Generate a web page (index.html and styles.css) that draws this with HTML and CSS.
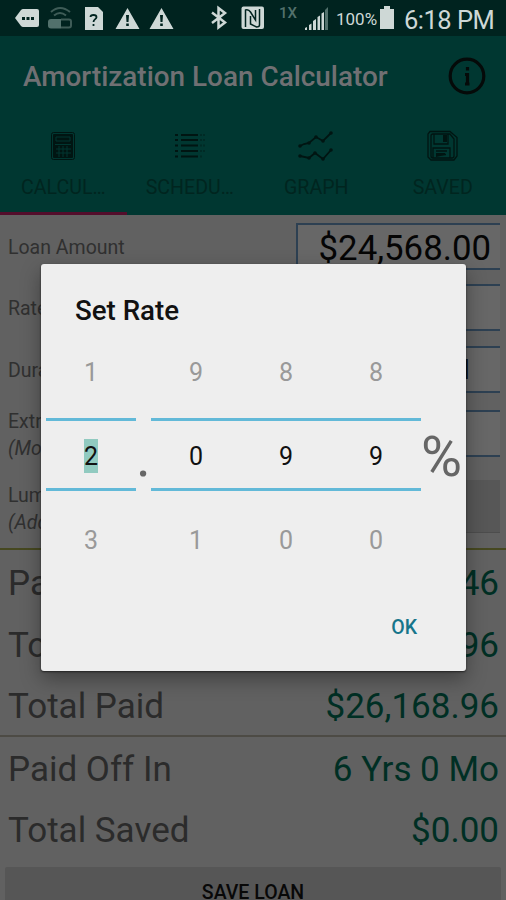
FILE: index.html
```
<!DOCTYPE html>
<html lang="en">
<head>
<meta charset="utf-8">
<title>Amortization Loan Calculator</title>
<link rel="stylesheet" href="styles.css">
</head>
<body>
<main class="screen">
  <header class="status">
    <svg class="status-icons" width="506" height="36" viewBox="0 0 506 36" aria-hidden="true">
      <g class="lit">
        <path d="M15 18l6-8q1-1 2-1h14q2 0 2 2v14q0 2-2 2H23q-1 0-2-1z"/>
        <path d="M85 7h13l5 5v18H85z"/>
        <path d="M127.500 8l12 21h-24zM161.500 8l12 21h-24z"/>
        <rect x="241.500" y="6.500" width="22.500" height="22.500" rx="2"/>
        <path d="M380 9h4V6h6v3h4v20h-14z"/>
      </g>
      <g class="hole"><path d="M22 17h3v3h-3zM26.500 17h3v3h-3zM31 17h3v3h-3zM126 15h3l-.5 7h-2zM126.200 23.500h2.600v2.500h-2.600zM160 15h3l-.5 7h-2zM160.200 23.500h2.600v2.500h-2.600z"/></g>
      <path class="hole-line" d="M90.500 17q0-2 3-2t3 2.200c0 2-3 2-3 4.800M93.500 24v2"/>
      <path class="hole-line nfc" d="M245.500 27V10q3-1 5 2l5 8V10M250.500 16v8l6 3q3 0 3-2V9"/>
      <g class="dim-line"><path d="M51 12q9-8 19 0M54 15.500q6-5 12 0M61 19.500h8q2 0 2 2v4q0 2-2 2h-8"/></g>
      <path class="dim" d="M51 19h10v9.500H51q-3 0-3-3V22q0-3 3-3z"/>
      <path class="bt" d="M212 12.500l13 10-6.500 5V8l6.500 5-13 10"/>
      <path class="lit" d="M305 30v-2l2-1v3zM309 30v-5l2.500-1.500V30zM313 30v-9l3-2v11zM317.500 30V17l2.500-1.500V30zM321.500 30V13.500l2.500-1.500v18z"/>
      <path class="dim" d="M325 30V10l3-3v23z"/>
    </svg>
    <span class="net">1X</span><span class="pct">100%</span><span class="clock">6:18 PM</span>
  </header>
  <div class="toolbar">
    <h1>Amortization Loan Calculator</h1>
    <svg width="40" height="40" viewBox="0 0 40 40" class="info" aria-hidden="true"><circle cx="20" cy="20" r="16.800"/><path d="M20.500 11v3.600M18 18.500h2.500v9M18 28h4.500"/></svg>
  </div>
  <nav class="tabs">
    <div class="tab active">
      <svg width="34" height="34" viewBox="0 0 34 34" aria-hidden="true"><rect x="5.500" y="3.500" width="23" height="27" rx="2" class="thin"/><rect x="7" y="5" width="20" height="24" rx="1" class="solid"/><path class="cut" d="M10 8h14v4H10zM9 15.500h16M10 20h15M10 24h15M13 17v11M17 17v11M21 17v11"/></svg>
      <span>CALCUL…</span>
    </div>
    <div class="tab">
      <svg width="34" height="34" viewBox="0 0 34 34" aria-hidden="true"><path class="rows" d="M8 6h17M8 11h17M8 16.500h17M8 22h17M8 27.500h17"/><path class="rows" d="M2 6h3M2 11h3M2 16.500h3M2 22h3M2 27.500h3"/><path class="faint" d="M27 6h2M30 6h2M27 11h2M30 11h2M27 16.500h2M30 16.500h2M27 22h2M30 22h2M27 27.500h2"/></svg>
      <span>SCHEDU…</span>
    </div>
    <div class="tab">
      <svg width="36" height="34" viewBox="0 0 36 34" aria-hidden="true"><path class="graph" d="M2 17l4-2 5-1 7-6 7 4 8-8M2 27l9 2 6-5 8 6 8-9"/><path class="knots" d="M2 17h0M11 14h0M18 8h0M25 12h0M33 4h0M2 27h0M11 29h0M17 24h0M25 30h0M33 21h0"/></svg>
      <span>GRAPH</span>
    </div>
    <div class="tab">
      <svg width="34" height="34" viewBox="0 0 34 34" aria-hidden="true"><path class="disk" d="M4 2.500h20l7 6V27l-3 4H5l-3-3V5zM7 5h17l4 5v17q0 2-2 2H7q-2 0-2-2V7q0-2 2-2zM8 5v10h14V5M7 29V19h17v10M10 22h11M10 25.500h10"/><path class="solid" d="M17 6h4v7h-4zM10 24h9v2l-9 2z"/></svg>
      <span>SAVED</span>
    </div>
  </nav>
  <section class="form">
    <div class="row r1"><label>Loan Amount</label><div class="field">$24,568.00</div></div>
    <div class="row r2"><label>Rate</label><div class="field"></div></div>
    <div class="row r3"><label>Duration</label><div class="field months">72 M</div></div>
    <div class="row r4"><label>Extra<br><i>(Mon)</i></label><div class="field"></div></div>
    <div class="row r5"><label>Lump<br><i>(Add)</i></label><div class="lump"></div></div>
  </section>
  <section class="results">
    <div class="result"><span>Payment</span><b>$363.46</b></div>
    <div class="result"><span>Total Int</span><b>$1,600.96</b></div>
    <div class="result"><span>Total Paid</span><b>$26,168.96</b></div>
  </section>
  <section class="results payoff">
    <div class="result"><span>Paid Off In</span><b>6 Yrs 0 Mo</b></div>
    <div class="result"><span>Total Saved</span><b>$0.00</b></div>
  </section>
  <div class="save">SAVE LOAN</div>
  <div class="dialog">
    <h2>Set Rate</h2>
    <div class="picker">
      <div class="wheel"><span>1</span><strong><mark>2</mark></strong><span>3</span></div>
      <div class="symbol">.</div>
      <div class="wheel"><span>9</span><strong>0</strong><span>1</span></div>
      <div class="wheel"><span>8</span><strong>9</strong><span>0</span></div>
      <div class="wheel"><span>8</span><strong>9</strong><span>0</span></div>
      <div class="symbol">%</div>
    </div>
    <div class="ok">OK</div>
  </div>
</main>
</body>
</html>
```
FILE: styles.css
```
* { box-sizing: border-box; }
body { margin: 0; font-family: Roboto, "Liberation Sans", sans-serif; }
.screen { position: relative; width: 506px; height: 900px; overflow: hidden; background: #616161; color: #2b2b2b; }
.status { position: relative; height: 36px; background: #00231f; color: #ced8d6; display: flex; justify-content: flex-end; align-items: center; padding-right: 12px; white-space: nowrap; }
.status-icons { position: absolute; left: 0; top: 0; }
.lit { fill: #ced8d6; }
.hole { fill: #00231f; }
.hole-line { fill: none; stroke: #00231f; stroke-width: 1.8; }
.nfc { stroke-width: 1.5; }
.dim { fill: #52716c; }
.dim-line { fill: none; stroke: #3e5c57; stroke-width: 2; }
.bt { fill: none; stroke: #ced8d6; stroke-width: 2.5; }
.net { font-size: 15px; font-weight: 500; color: #52716c; margin: -10px 39px 0 0; }
.pct { font-size: 17px; width: 42px; margin-right: 26px; padding-top: 2px; }
.clock { font-size: 25.5px; width: 90px; padding-top: 3px; letter-spacing: -.5px; }
.toolbar { height: 79px; background: #003731; display: flex; align-items: center; justify-content: space-between; padding: 0 19px 0 23px; }
h1 { margin: 2px 0 0; font-size: 27.9px; font-weight: 500; line-height: 36px; color: #707073; white-space: nowrap; }
.info { fill: none; stroke: #050a09; stroke-width: 3.2; }
.tabs { height: 100px; background: #003731; display: grid; grid-template-columns: repeat(4, 1fr); }
.tab { display: flex; flex-direction: column; align-items: center; padding-top: 14px; color: #00251f; font-size: 19.6px; }
.tab span { margin-top: 13px; line-height: 24px; }
.active { border-bottom: 3px solid #530d2b; }
.tab svg { fill: none; stroke: #001512; }
.thin { stroke-width: 1; }
.tab .solid { fill: #001512; stroke: none; }
.cut { stroke: #003731; stroke-width: 1; }
.rows { stroke-width: 2.2; }
.faint { stroke: #002a25; stroke-width: 1.8; }
.graph { stroke-width: 1.8; }
.knots { stroke-width: 3.6; stroke-linecap: round; }
.disk { stroke-width: 1.3; }
.row { display: flex; justify-content: space-between; align-items: center; padding: 0 6px 0 8px; }
.row label { font-size: 19.5px; line-height: 27px; color: #303030; padding-top: 2px; }
.r1 { height: 62px; }
.r2 { height: 61px; }
.r3 { height: 62px; }
.r4 { height: 66px; }
.r5 { height: 82px; padding-bottom: 6px; }
.r4 label { padding-top: 4px; }
.r5 label { padding-top: 10px; }
.field { width: 204px; height: 47px; border: 2px solid #2d4052; border-right: 0; background: #676767; color: #050505; font-size: 34.8px; line-height: 46px; text-align: right; padding-right: 9px; }
.months { font-size: 28px; line-height: 43px; padding-right: 30px; }
.lump { width: 204px; height: 53px; background: #575757; border-bottom: 1px solid #4d4d4d; margin-top: 4px; }
.results { border-top: 2px solid #464820; padding-top: 3px; }
.result { height: 61.5px; display: flex; justify-content: space-between; align-items: center; padding: 0 7px 0 8px; font-size: 35px; }
.result b { font-weight: 400; color: #002f24; }
.payoff { border-color: #4d4b45; padding-top: 2px; margin-top: -3px; }
.save { margin: 5px 5px 0; height: 54px; border-radius: 2px; background: #565656; color: #080808; font-size: 19.5px; font-weight: 500; line-height: 52px; text-align: center; }
.dialog { position: absolute; left: 41px; top: 264px; width: 425px; height: 407px; padding: 28px 5px 0; border-radius: 3px; background: #eee; box-shadow: 0 1px 2px #222, 0 8px 20px rgba(0,0,0,.35); color: #111; }
h2 { margin: 0 0 1px 29px; font-size: 27.7px; font-weight: 500; line-height: 37px; }
.picker { display: flex; height: 251px; }
.wheel { width: 90px; display: grid; grid-template-rows: 88px 73px 90px; text-align: center; font-size: 25px; }
.wheel span { color: #999; line-height: 85px; }
.wheel span:last-child { line-height: 99px; }
.wheel strong { font-weight: 400; border-top: 3px solid #62b9d8; border-bottom: 3px solid #62b9d8; line-height: 71px; }
mark { background: #91cac0; color: #111; padding: 3px 0 2px; }
.symbol { width: 15px; font-size: 56px; line-height: 255px; color: #666; }
.symbol:last-child { width: 40px; }
.ok { margin: 34px 44px 0 0; font-size: 19.5px; font-weight: 500; line-height: 26px; color: #16758b; text-align: right; }
```
